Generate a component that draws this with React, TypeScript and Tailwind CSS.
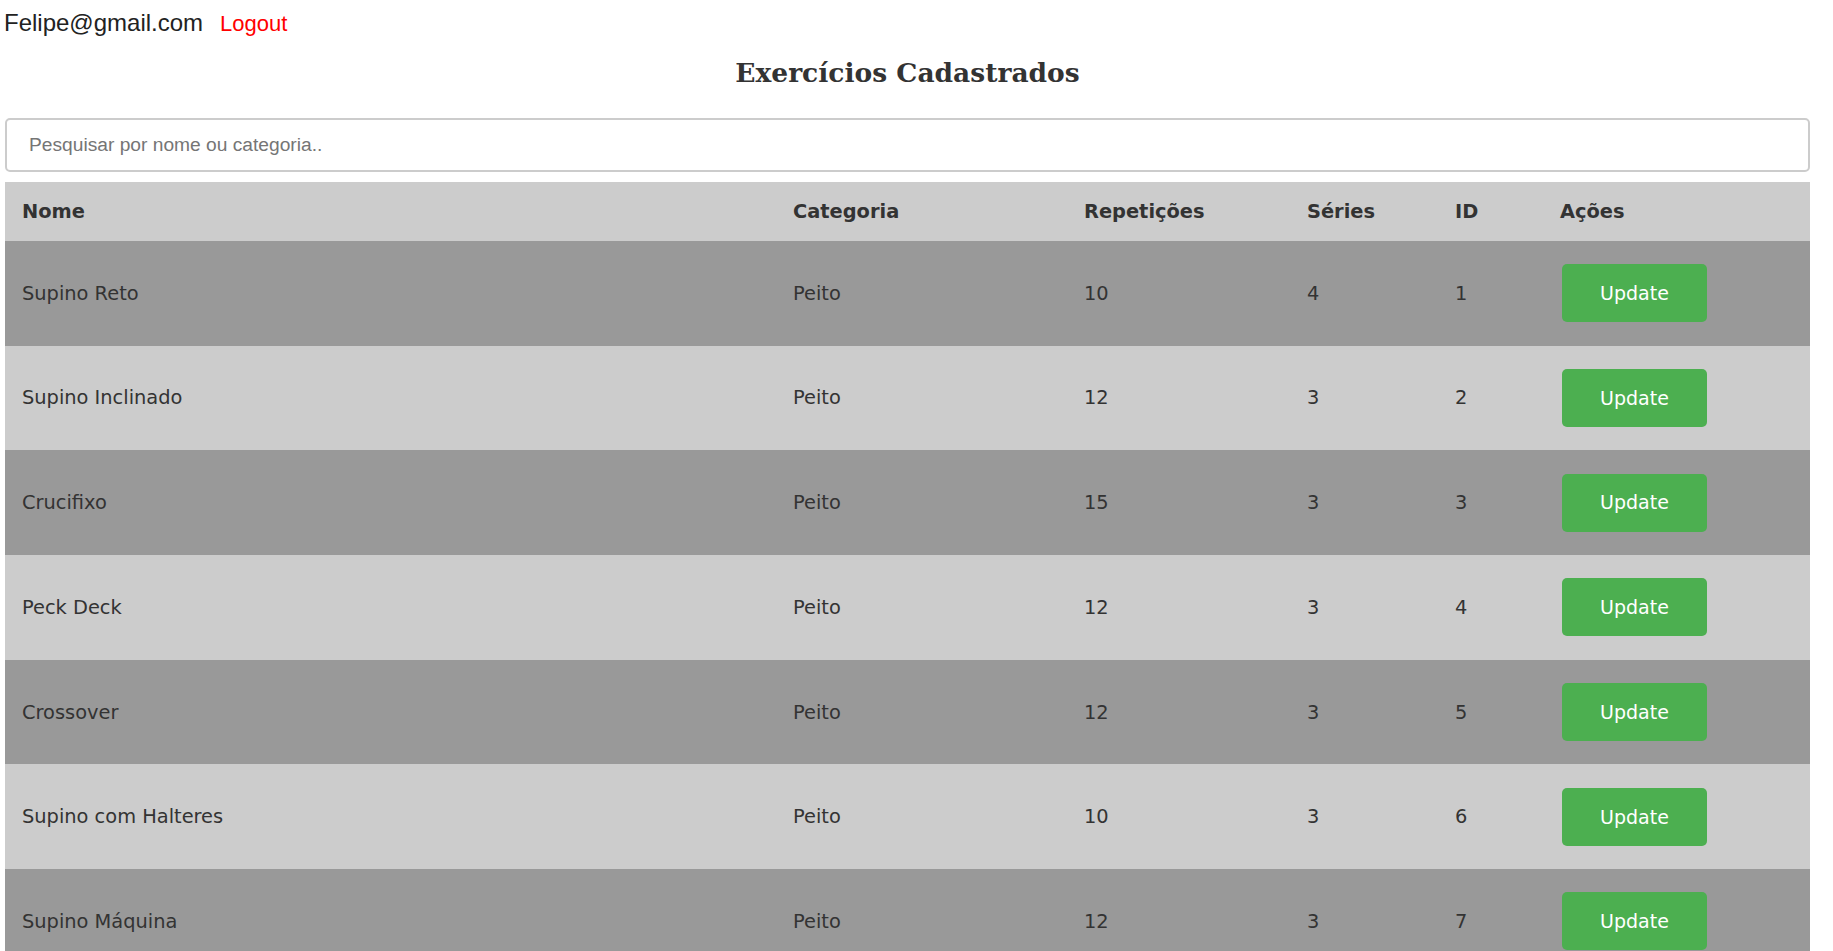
import { useState } from 'react';

interface Exercise {
  id: number;
  nome: string;
  categoria: string;
  repeticoes: number;
  series: number;
}

const exercises: Exercise[] = [
  { id: 1, nome: 'Supino Reto', categoria: 'Peito', repeticoes: 10, series: 4 },
  { id: 2, nome: 'Supino Inclinado', categoria: 'Peito', repeticoes: 12, series: 3 },
  { id: 3, nome: 'Crucifixo', categoria: 'Peito', repeticoes: 15, series: 3 },
  { id: 4, nome: 'Peck Deck', categoria: 'Peito', repeticoes: 12, series: 3 },
  { id: 5, nome: 'Crossover', categoria: 'Peito', repeticoes: 12, series: 3 },
  { id: 6, nome: 'Supino com Halteres', categoria: 'Peito', repeticoes: 10, series: 3 },
  { id: 7, nome: 'Supino Máquina', categoria: 'Peito', repeticoes: 12, series: 3 },
  { id: 8, nome: 'Flexão de Braço', categoria: 'Peito', repeticoes: 15, series: 3 },
  { id: 9, nome: 'Agachamento', categoria: 'Pernas', repeticoes: 12, series: 4 },
];

const cell = 'pl-[17px] text-left align-middle';

export default function App() {
  const [query, setQuery] = useState('');

  const q = query.toLowerCase();
  const filtered = exercises.filter(
    (e) => e.nome.toLowerCase().includes(q) || e.categoria.toLowerCase().includes(q)
  );

  return (
    <div className="min-h-screen bg-white pb-4">
      <div className="ml-[5px] w-[1805px]">
        {/* User bar */}
        <div className="flex items-baseline pt-[9px] -ml-[1px] font-['Liberation_Sans',Arial,sans-serif] leading-[28px]">
          <span className="text-[24px] text-[#222]">Felipe@gmail.com</span>
          <button className="ml-[17px] text-[22px] text-[#ff0000] cursor-pointer">Logout</button>
        </div>

        {/* Title */}
        <h2 className="mt-[20px] text-center font-['DejaVu_Serif',Georgia,serif] text-[26.5px] leading-[30px] font-bold text-[#333]">
          Exercícios Cadastrados
        </h2>

        {/* Search */}
        <input
          type="text"
          value={query}
          onChange={(e) => setQuery(e.target.value)}
          placeholder="Pesquisar por nome ou categoria.."
          className="mt-[30px] block h-[54px] w-full rounded-[5px] border-2 border-[#ccc] pl-[22px] font-['Liberation_Sans',Arial,sans-serif] text-[19.2px] text-[#333] placeholder:text-[#757575] outline-none"
        />

        {/* Table */}
        <table className="mt-[10px] w-full table-fixed border-collapse font-['DejaVu_Sans',Verdana,sans-serif] text-[19.4px] text-[#333]">
          <colgroup>
            <col className="w-[771px]" />
            <col className="w-[291px]" />
            <col className="w-[223px]" />
            <col className="w-[148px]" />
            <col className="w-[105px]" />
            <col className="w-[267px]" />
          </colgroup>
          <thead>
            <tr className="h-[59px] bg-[#ccc]">
              <th className={cell}>Nome</th>
              <th className={cell}>Categoria</th>
              <th className={cell}>Repetições</th>
              <th className={cell}>Séries</th>
              <th className={cell}>ID</th>
              <th className={cell}>Ações</th>
            </tr>
          </thead>
          <tbody>
            {filtered.map((ex, i) => (
              <tr key={ex.id} className={i % 2 === 0 ? 'h-[104.7px] bg-[#999]' : 'h-[104.7px] bg-[#ccc]'}>
                <td className={cell}>{ex.nome}</td>
                <td className={cell}>{ex.categoria}</td>
                <td className={cell}>{ex.repeticoes}</td>
                <td className={cell}>{ex.series}</td>
                <td className={cell}>{ex.id}</td>
                <td className={cell}>
                  <button className="ml-[2px] flex h-[58px] w-[145px] cursor-pointer items-center justify-center rounded-[5px] bg-[#4CAF50] text-[19px] text-white">
                    Update
                  </button>
                </td>
              </tr>
            ))}
          </tbody>
        </table>
      </div>
    </div>
  );
}
